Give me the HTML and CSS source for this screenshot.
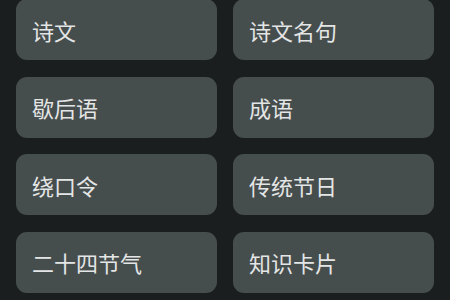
FILE: index.html
```html
<!DOCTYPE html>
<html lang="zh-CN">
<head>
<meta charset="utf-8">
<title>分类</title>
<link rel="stylesheet" href="styles.css">
</head>
<body>
<div class="grid">
  <div class="card">诗文</div>
  <div class="card">诗文名句</div>
  <div class="card">歇后语</div>
  <div class="card">成语</div>
  <div class="card">绕口令</div>
  <div class="card">传统节日</div>
  <div class="card">二十四节气</div>
  <div class="card">知识卡片</div>
</div>
</body>
</html>
```
FILE: styles.css
```css
html, body {
  margin: 0;
  padding: 0;
  background: #1b1e1f;
  width: 450px;
  height: 300px;
  overflow: hidden;
}
.grid {
  display: grid;
  grid-template-columns: 1fr 1fr;
  grid-auto-rows: 61px;
  row-gap: 16.5px;
  column-gap: 16px;
  padding: 0 16px;
  margin-top: -1px;
}
.card {
  background: #464d4d;
  border-radius: 11px;
  display: flex;
  align-items: center;
  padding: 0 16px;
  color: #e4e6e6;
  font-family: "Noto Sans CJK SC", "Noto Sans", sans-serif;
  font-size: 22px;
  line-height: 1;
}
```
